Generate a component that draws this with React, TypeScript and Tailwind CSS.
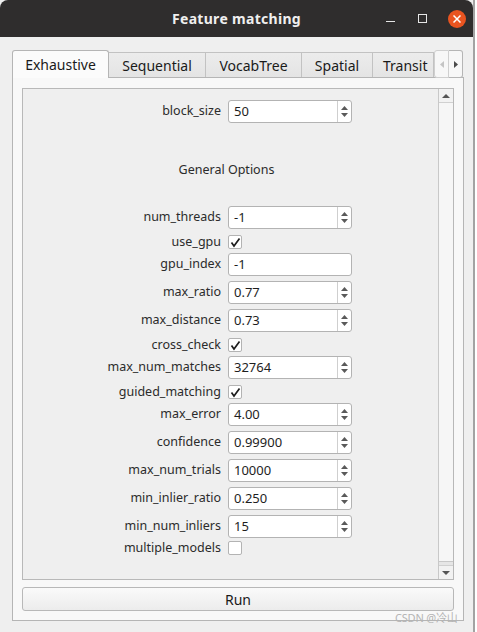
import React from 'react';

const font = { fontFamily: '"Noto Sans", "Noto Sans CJK SC", sans-serif' };

type Field =
  | { kind: 'spin'; label: string; value: string }
  | { kind: 'edit'; label: string; value: string }
  | { kind: 'check'; label: string; checked: boolean; lift?: boolean };

const fields: Field[] = [
  { kind: 'spin', label: 'num_threads', value: '-1' },
  { kind: 'check', label: 'use_gpu', checked: true },
  { kind: 'edit', label: 'gpu_index', value: '-1' },
  { kind: 'spin', label: 'max_ratio', value: '0.77' },
  { kind: 'spin', label: 'max_distance', value: '0.73' },
  { kind: 'check', label: 'cross_check', checked: true },
  { kind: 'spin', label: 'max_num_matches', value: '32764' },
  { kind: 'check', label: 'guided_matching', checked: true },
  { kind: 'spin', label: 'max_error', value: '4.00' },
  { kind: 'spin', label: 'confidence', value: '0.99900' },
  { kind: 'spin', label: 'max_num_trials', value: '10000' },
  { kind: 'spin', label: 'min_inlier_ratio', value: '0.250' },
  { kind: 'spin', label: 'min_num_inliers', value: '15' },
  { kind: 'check', label: 'multiple_models', checked: false, lift: true },
];

const tabs = [
  { name: 'Exhaustive', w: 'w-[97px]' },
  { name: 'Sequential', w: 'w-[97px]' },
  { name: 'VocabTree', w: 'w-[96px]' },
  { name: 'Spatial', w: 'w-[71px]' },
  { name: 'Transit', w: 'w-[61px]' },
];

function SpinBox({ value, arrows = true }: { value: string; arrows?: boolean }) {
  return (
    <div className="flex h-[23px] w-[124px] items-stretch rounded-[3px] border border-[#b3b3b3] bg-white">
      <div className="flex flex-1 items-center pl-[5px] text-[13px] text-[#1e1e1e]">{value}</div>
      {arrows && (
        <div className="flex w-[14px] flex-col items-center justify-center gap-[3px] border-l border-[#cfcfcf]">
          <svg width="7" height="4" viewBox="0 0 7 4">
            <path d="M0 4 L3.5 0 L7 4 Z" fill="#5a5a5a" />
          </svg>
          <svg width="7" height="4" viewBox="0 0 7 4">
            <path d="M0 0 L3.5 4 L7 0 Z" fill="#5a5a5a" />
          </svg>
        </div>
      )}
    </div>
  );
}

function CheckBox({ checked }: { checked: boolean }) {
  return (
    <div className="flex h-[14px] w-[14px] items-center justify-center rounded-[2px] border border-[#b3b3b3] bg-white">
      {checked && (
        <svg width="11" height="11" viewBox="0 0 11 11">
          <path d="M1.5 5.5 L4 9 L9.5 1.5" stroke="#1e1e1e" strokeWidth="1.7" fill="none" />
        </svg>
      )}
    </div>
  );
}

function Row({ field }: { field: Field }) {
  if (field.kind === 'check') {
    return (
      <div className={`flex h-[19px] items-start ${field.lift ? '-mt-[3px]' : ''}`}>
        <div className="w-[199px] pr-[1px] text-right text-[12.5px] leading-[15px] text-[#2b2b2b]">{field.label}</div>
        <div className="ml-[6px] mt-[1px]">
          <CheckBox checked={field.checked} />
        </div>
      </div>
    );
  }
  return (
    <div className="flex h-[28px] items-start">
      <div className="flex h-[23px] w-[199px] items-center justify-end pr-[1px] text-[12.5px] text-[#2b2b2b]">
        {field.label}
      </div>
      <div className="ml-[6px]">
        <SpinBox value={field.value} arrows={field.kind === 'spin'} />
      </div>
    </div>
  );
}

export default function App() {
  return (
    <div className="relative h-[632px] w-[477px] overflow-hidden bg-white" style={font}>
      <div className="flex h-[632px] w-[475px] flex-col border-r-2 border-[#a3a3a3] bg-[#efefef]">
        {/* Title bar */}
        <div className="relative flex h-[37px] shrink-0 items-center justify-center rounded-t-[8px] bg-[#2f2d2d]">
          <span className="text-[14px] font-bold tracking-[0.3px] text-[#efefef]">Feature matching</span>
          <div className="absolute right-0 top-0 flex h-[37px] items-center">
            <div className="mr-[23px] mt-[6px] h-[1.5px] w-[9px] bg-[#e6e6e6]" />
            <div className="mr-[21px] h-[9px] w-[9px] border-[1.5px] border-[#e6e6e6]" />
            <div className="mr-[7px] flex h-[18px] w-[18px] items-center justify-center rounded-full bg-[#e95420]">
              <svg width="8" height="8" viewBox="0 0 8 8">
                <path d="M0.5 0.5 L7.5 7.5 M7.5 0.5 L0.5 7.5" stroke="#fff" strokeWidth="1.5" />
              </svg>
            </div>
          </div>
        </div>

        {/* Body */}
        <div className="flex flex-1 flex-col pl-[12px] pr-[9px] pt-[13px]">
          {/* Tab bar */}
          <div className="relative z-10 flex h-[27px] items-start">
            {tabs.map((t, i) =>
              i === 0 ? (
                <div
                  key={t.name}
                  className={`${t.w} flex h-[28px] items-center justify-center rounded-t-[3px] border border-b-0 border-[#b5b5b5] bg-[#fbfbfb] text-[14px] text-[#1a1a1a]`}
                >
                  {t.name}
                </div>
              ) : (
                <div
                  key={t.name}
                  className={`${t.w} mt-[2px] flex h-[25px] items-center overflow-hidden border border-l-0 border-b-0 border-[#c2c2c2] bg-gradient-to-b from-[#ececec] to-[#e4e4e4] text-[14px] text-[#1a1a1a] ${i === 4 ? 'justify-start pl-[10px]' : 'justify-center'}`}
                >
                  {t.name}
                </div>
              ),
            )}
            <div className="flex h-[28px] w-[15px] items-center justify-center rounded-l-[3px] border border-[#cfcfcf] bg-[#f7f7f7]">
              <svg width="4" height="7" viewBox="0 0 4 7">
                <path d="M4 0 L0 3.5 L4 7 Z" fill="#c4c4c4" />
              </svg>
            </div>
            <div className="flex h-[28px] w-[14px] items-center justify-center rounded-r-[3px] border border-l-0 border-[#b5b5b5] bg-[#f7f7f7]">
              <svg width="4" height="7" viewBox="0 0 4 7">
                <path d="M0 0 L4 3.5 L0 7 Z" fill="#4a4a4a" />
              </svg>
            </div>
          </div>

          {/* Pane */}
          <div className="flex h-[544px] flex-col border border-[#b5b5b5] bg-[#f8f8f8] px-[9px] pb-[9px] pt-[10px]">
            <div className="flex h-[492px] border border-[#b8b8b8] bg-[#efefef]">
              <div className="flex flex-1 flex-col pt-[11px]">
                <Row field={{ kind: 'spin', label: 'block_size', value: '50' }} />
                <div className="flex h-[78px] items-center justify-center pr-[8px] pt-[7px] text-[12.5px] text-[#2b2b2b]">
                  General Options
                </div>
                {fields.map((f) => (
                  <Row key={f.label} field={f} />
                ))}
              </div>
              {/* Scrollbar */}
              <div className="flex w-[15px] flex-col border-l border-[#c8c8c8] bg-[#e6e6e6]">
                <div className="flex h-[14px] items-center justify-center border-b border-[#d0d0d0] bg-[#f2f2f2]">
                  <svg width="8" height="4" viewBox="0 0 8 4">
                    <path d="M0 4 L4 0 L8 4 Z" fill="#555" />
                  </svg>
                </div>
                <div className="flex-1 border-b border-[#c8c8c8] bg-[#f6f6f6]" />
                <div className="h-[3px]" />
                <div className="flex h-[14px] items-center justify-center border-t border-[#d0d0d0] bg-[#f2f2f2]">
                  <svg width="8" height="4" viewBox="0 0 8 4">
                    <path d="M0 0 L4 4 L8 0 Z" fill="#555" />
                  </svg>
                </div>
              </div>
            </div>
            <div className="mt-[7px] flex h-[24px] items-center justify-center rounded-[3px] border border-[#b8b8b8] bg-gradient-to-b from-[#fafafa] to-[#ececec] text-[14px] text-[#1a1a1a]">
              Run
            </div>
          </div>
        </div>
      </div>
      <div className="absolute left-[395px] top-[610px] text-[11px] tracking-[-0.2px] text-[#b4b4b4]">CSDN @冷山</div>
    </div>
  );
}
